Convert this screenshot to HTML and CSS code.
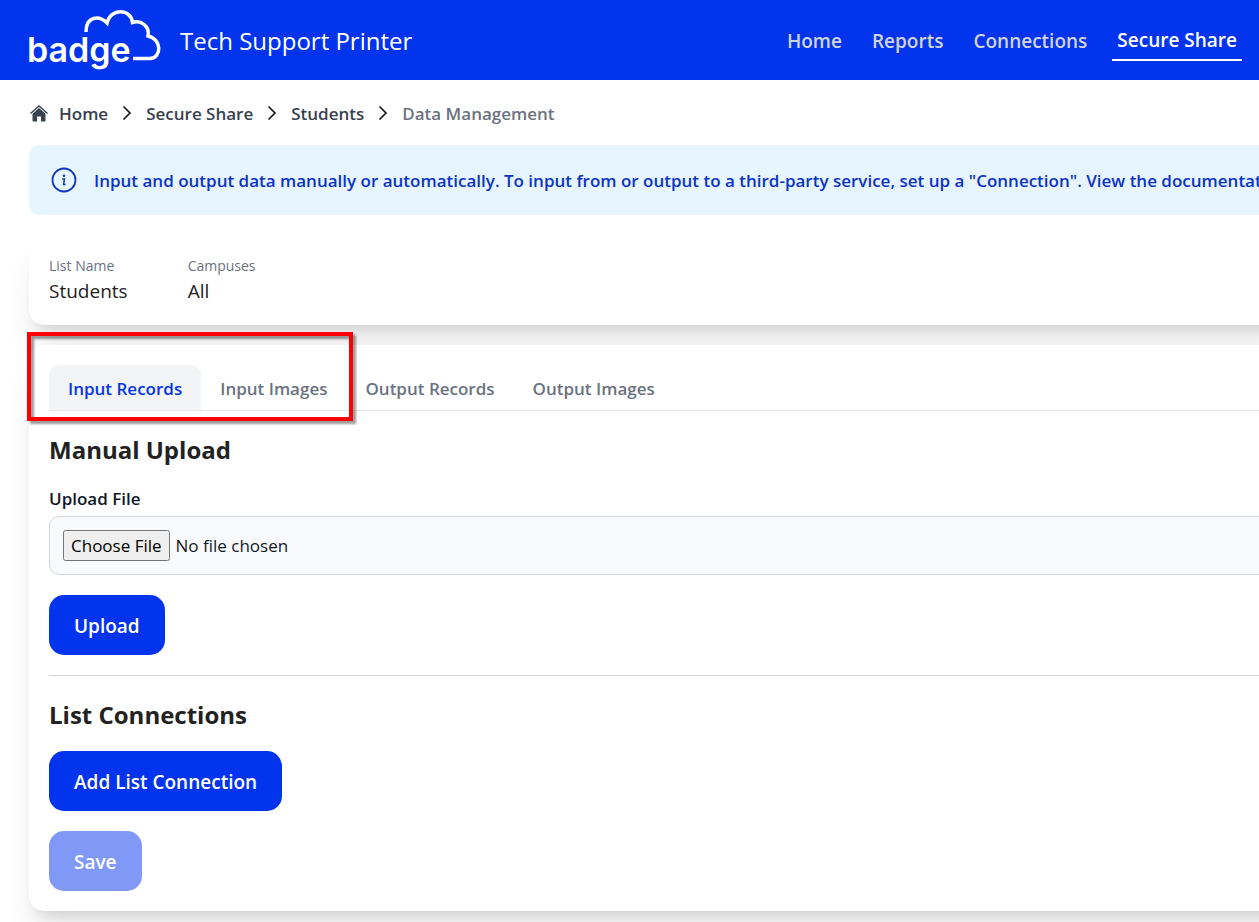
FILE: index.html
```html
<!DOCTYPE html>
<html lang="en">
<head>
<meta charset="utf-8">
<meta name="viewport" content="width=device-width, initial-scale=1">
<title>Data Management</title>
<link rel="stylesheet" href="styles.css">
</head>
<body>
<header class="topbar">
  <a class="brand" href="#" aria-label="badge home">
    <svg class="logo" viewBox="0 0 132 60" width="132" height="60">
      <text class="logo-text" x="-2" y="52">badge</text>
      <path class="logo-cloud" d="M57 22C57 6 70 5 78 13C81-2 102-2 103.500 12.500C112 10 121 16 119 26C133 29 133 48 121 48.500H104"/>
    </svg>
    <span class="brand-name">Tech Support Printer</span>
  </a>
  <nav class="nav">
    <a class="nav-link" href="#">Home</a>
    <a class="nav-link" href="#">Reports</a>
    <a class="nav-link" href="#">Connections</a>
    <a class="nav-link active" href="#">Secure Share</a>
  </nav>
</header>
<main class="page">
  <nav class="crumbs" aria-label="Breadcrumb">
    <a class="crumb home" href="#">
      <svg class="home-icon" viewBox="0 0 20 18" width="20" height="18">
        <path d="M1.500 9.500L10 2L18.500 9.500" fill="none" stroke="currentColor" stroke-width="1.400"/>
        <path d="M10 4L16.500 9.800V16.500Q16.500 17.500 15.500 17.500H12V12.500H8V17.500H4.500Q3.500 17.500 3.500 16.500V9.800Z" fill="currentColor"/>
      </svg>Home</a>
    <svg class="chevron" viewBox="0 0 10 16" width="10" height="16"><path d="M1.500 1.500L8 8L1.500 14.500"/></svg>
    <a class="crumb" href="#">Secure Share</a>
    <svg class="chevron" viewBox="0 0 10 16" width="10" height="16"><path d="M1.500 1.500L8 8L1.500 14.500"/></svg>
    <a class="crumb" href="#">Students</a>
    <svg class="chevron" viewBox="0 0 10 16" width="10" height="16"><path d="M1.500 1.500L8 8L1.500 14.500"/></svg>
    <span class="crumb current">Data Management</span>
  </nav>
  <div class="alert">
    <svg class="info" viewBox="0 0 26 26" width="26" height="26">
      <circle cx="13" cy="13" r="11.500" fill="none" stroke="currentColor" stroke-width="1.800"/>
      <circle cx="13" cy="8.700" r="1.200" fill="currentColor"/>
      <path d="M11.200 12H13.400L12.600 17.600H14.600" fill="none" stroke="currentColor" stroke-width="1.500"/>
    </svg>
    <p class="alert-text">Input and output data manually or automatically. To input from or output to a third-party service, set up a "Connection". View the documentation</p>
  </div>
  <dl class="card summary">
    <div class="fact"><dt>List Name</dt><dd>Students</dd></div>
    <div class="fact"><dt>Campuses</dt><dd>All</dd></div>
  </dl>
  <section class="card panel">
    <div class="highlight"></div>
    <div class="tabs" role="tablist">
      <button class="tab selected" type="button" role="tab" aria-selected="true">Input Records</button>
      <button class="tab" type="button" role="tab">Input Images</button>
      <button class="tab" type="button" role="tab">Output Records</button>
      <button class="tab" type="button" role="tab">Output Images</button>
    </div>
    <h2 class="title">Manual Upload</h2>
    <label class="label" for="file">Upload File</label>
    <input class="file" id="file" type="file">
    <button class="btn" type="button">Upload</button>
    <hr class="rule">
    <h2 class="title">List Connections</h2>
    <button class="btn" type="button">Add List Connection</button>
    <button class="btn save" type="button" disabled>Save</button>
  </section>
</main>
</body>
</html>
```
FILE: styles.css
```css
* { box-sizing: border-box; margin: 0; }
body { background: #fff; color: #222; font-family: "Open Sans", "Noto Sans", sans-serif; font-size: 17px; overflow-x: hidden; }
a { color: inherit; text-decoration: none; }
button { font: inherit; border: 0; }

.topbar { display: flex; align-items: center; justify-content: space-between; height: 80px; padding: 0 17px 0 29px; background: #0234ee; color: #fff; }
.brand { display: flex; align-items: center; gap: 19px; }
.logo { overflow: visible; }
.logo-text { font-family: Inter, sans-serif; font-size: 34px; font-weight: 600; fill: #fff; }
.logo-cloud { fill: none; stroke: #fff; stroke-width: 3.500; }
.brand-name { font-size: 24px; white-space: nowrap; }
.nav { display: flex; align-items: center; gap: 20px; font-size: 19px; font-weight: 600; }
.nav-link { padding: 2px 5px 0; line-height: 28px; color: #d1d5db; white-space: nowrap; }
.nav-link.active { color: #fff; padding-top: 7px; padding-bottom: 5px; border-bottom: 2px solid #fff; }

.page { padding: 0 0 40px 29px; overflow: hidden; }
.crumbs { display: flex; align-items: center; gap: 14px; height: 65px; padding-top: 1px; color: #374151; font-weight: 600; }
.crumb { white-space: nowrap; }
.home { display: flex; align-items: center; gap: 10px; }
.current { color: #6b7280; }
.chevron { fill: none; stroke: #111; stroke-width: 1.600; flex: none; }

.alert { display: flex; align-items: center; gap: 17px; height: 70px; padding-left: 22px; border-radius: 10px 0 0 10px; background: #e6f5ff; color: #0d33c4; font-weight: 600; }
.info { flex: none; }
.alert-text { white-space: nowrap; }

.card { margin: 20px -40px 0 0; background: #fff; box-shadow: 0 25px 31px -6px rgba(0, 0, 0, .1), 0 10px 12px -7px rgba(0, 0, 0, .1); }
.summary { display: flex; gap: 60px; padding: 20px; border-radius: 15px; }
.fact dt { color: #6b7280; font-size: 14px; line-height: 22px; }
.fact dd { font-size: 19px; line-height: 28px; }

.panel { position: relative; display: flex; flex-direction: column; align-items: flex-start; padding: 20px; border-radius: 15px; }
.highlight { position: absolute; left: -2px; top: -13px; width: 326px; height: 89px; border: 4px solid #f00; filter: drop-shadow(3px 3px 1px rgba(0, 0, 0, .4)); pointer-events: none; }
.tabs { display: flex; align-self: stretch; border-bottom: 1px solid #e5e7eb; }
.tab { height: 45px; padding: 2px 19px 0; border-radius: 10px 10px 0 0; background: none; color: #6b7280; font-weight: 600; white-space: nowrap; }
.tab.selected { background: #f3f4f6; color: #0234ee; }
.title { margin: 19px 0 16px; font-size: 24px; line-height: 40px; font-weight: 700; }
.label { color: #111827; font-weight: 600; line-height: 25px; margin-bottom: 5px; }
.file { align-self: stretch; height: 59px; margin-bottom: 20px; padding: 13px; border: 1px solid #d1d5db; border-radius: 10px; background: #f9fafb; color: #111827; font: inherit; }
.file::file-selector-button { font: inherit; padding: 2px 6px; margin-right: 6px; }
.btn { height: 60px; padding: 2px 25px 0; border-radius: 15px; background: #0234ee; color: #fff; font-size: 19px; font-weight: 600; }
.rule { align-self: stretch; margin-top: 20px; border: 0; border-top: 1px solid #d1d5db; }
.save { margin-top: 20px; background: #8099f6; }
```
